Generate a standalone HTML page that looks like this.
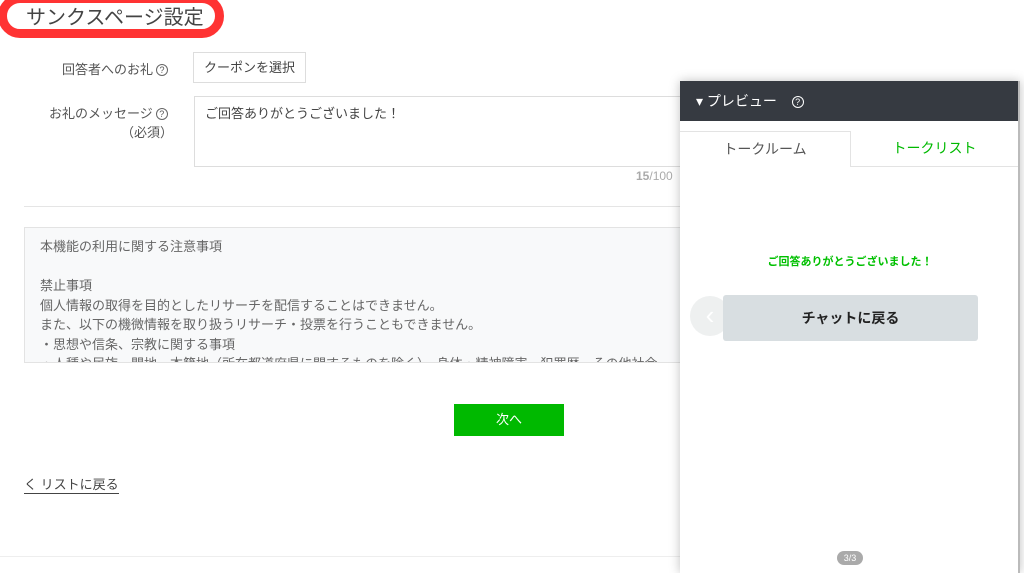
<!DOCTYPE html>
<html><head><meta charset="utf-8"><style>
*{margin:0;padding:0;box-sizing:border-box}
body{width:1024px;height:573px;overflow:hidden;background:#fff;font-family:"Liberation Sans","Noto Sans CJK JP",sans-serif;color:#555;position:relative}
.a{position:absolute}
.q{display:inline-block;width:12px;height:12px;border:1px solid #666;border-radius:50%;font-size:9px;line-height:10px;text-align:center;vertical-align:1px;margin-left:3px}
</style></head><body>
<div class="a" style="left:-2px;top:-6px;width:226px;height:44px;border:9px solid #f33;border-radius:22px"></div>
<div class="a" style="left:26px;top:5px;font-size:20px;color:#444;line-height:26px">サンクスページ設定</div>
<div class="a" style="left:62px;top:59px;font-size:13px;color:#555">回答者へのお礼<span class="q">?</span></div>
<div class="a" style="left:193px;top:52px;width:113px;height:31px;border:1px solid #ddd;font-size:13px;color:#444;line-height:29px;text-align:center">クーポンを選択</div>
<div class="a" style="left:49px;top:103px;font-size:13px;color:#555">お礼のメッセージ<span class="q">?</span></div>
<div class="a" style="left:121px;top:122px;font-size:13px;color:#555">（必須）</div>
<div class="a" style="left:194px;top:96px;width:520px;height:71px;border:1px solid #ddd;font-size:13px;color:#444;padding:6px 10px">ご回答ありがとうございました！</div>
<div class="a" style="left:636px;top:169px;font-size:12px;color:#aaa"><b>15</b>/100</div>
<div class="a" style="left:24px;top:206px;width:680px;height:1px;background:#e5e5e5"></div>
<div class="a" style="left:24px;top:227px;width:680px;height:136px;border:1px solid #e3e3e3;background:#f8f9fa;overflow:hidden;font-size:13px;color:#666;line-height:19.5px;padding:9px 15px">本機能の利用に関する注意事項<br><br>禁止事項<br>個人情報の取得を目的としたリサーチを配信することはできません。<br>また、以下の機微情報を取り扱うリサーチ・投票を行うこともできません。<br>・思想や信条、宗教に関する事項<br>・人種や民族、門地、本籍地（所在都道府県に関するものを除く）、身体・精神障害、犯罪歴、その他社会</div>
<div class="a" style="left:454px;top:404px;width:110px;height:32px;background:#00b900;color:#fff;font-size:13px;line-height:32px;text-align:center">次へ</div>
<div class="a" style="left:24px;top:476px;font-size:13px;color:#444;border-bottom:1px solid #444;line-height:17px">く リストに戻る</div>
<div class="a" style="left:0;top:556px;width:680px;height:1px;background:#eee"></div>
<div class="a" style="left:680px;top:81px;width:340px;height:492px;background:#fff;box-shadow:0 0 10px rgba(0,0,0,.25);border-right:2px solid #bbb">
 <div style="height:40px;background:#363a41;color:#fff;font-size:14px;line-height:40px;padding-left:16px">▾ プレビュー &nbsp; <span class="q" style="border-color:#fff">?</span></div>
 <div class="a" style="left:0;top:50px;width:171px;height:36px;border:1px solid #e3e3e3;border-bottom:none;border-left:none;text-align:center;line-height:34px;font-size:14px;color:#555">トークルーム</div>
 <div class="a" style="left:171px;top:85px;width:167px;height:1px;background:#e3e3e3"></div>
 <div class="a" style="left:171px;top:50px;width:167px;text-align:center;line-height:34px;font-size:14px;color:#00b900">トークリスト</div>
 <div class="a" style="left:0;top:172px;width:340px;text-align:center;font-size:11px;font-weight:bold;color:#00c000">ご回答ありがとうございました！</div>
 <div class="a" style="left:10px;top:215px;width:40px;height:40px;border-radius:50%;background:#eef0f0;color:#fff;font-size:26px;line-height:38px;text-align:center">‹</div>
 <div class="a" style="left:43px;top:214px;width:255px;height:46px;background:#d8dee1;border-radius:3px;text-align:center;line-height:46px;font-size:14px;font-weight:bold;color:#222">チャットに戻る</div>
 <div class="a" style="left:157px;top:470px;width:26px;height:14px;border-radius:7px;background:#aaa;color:#fff;font-size:9px;line-height:14px;text-align:center">3/3</div>
</div>
</body></html>
